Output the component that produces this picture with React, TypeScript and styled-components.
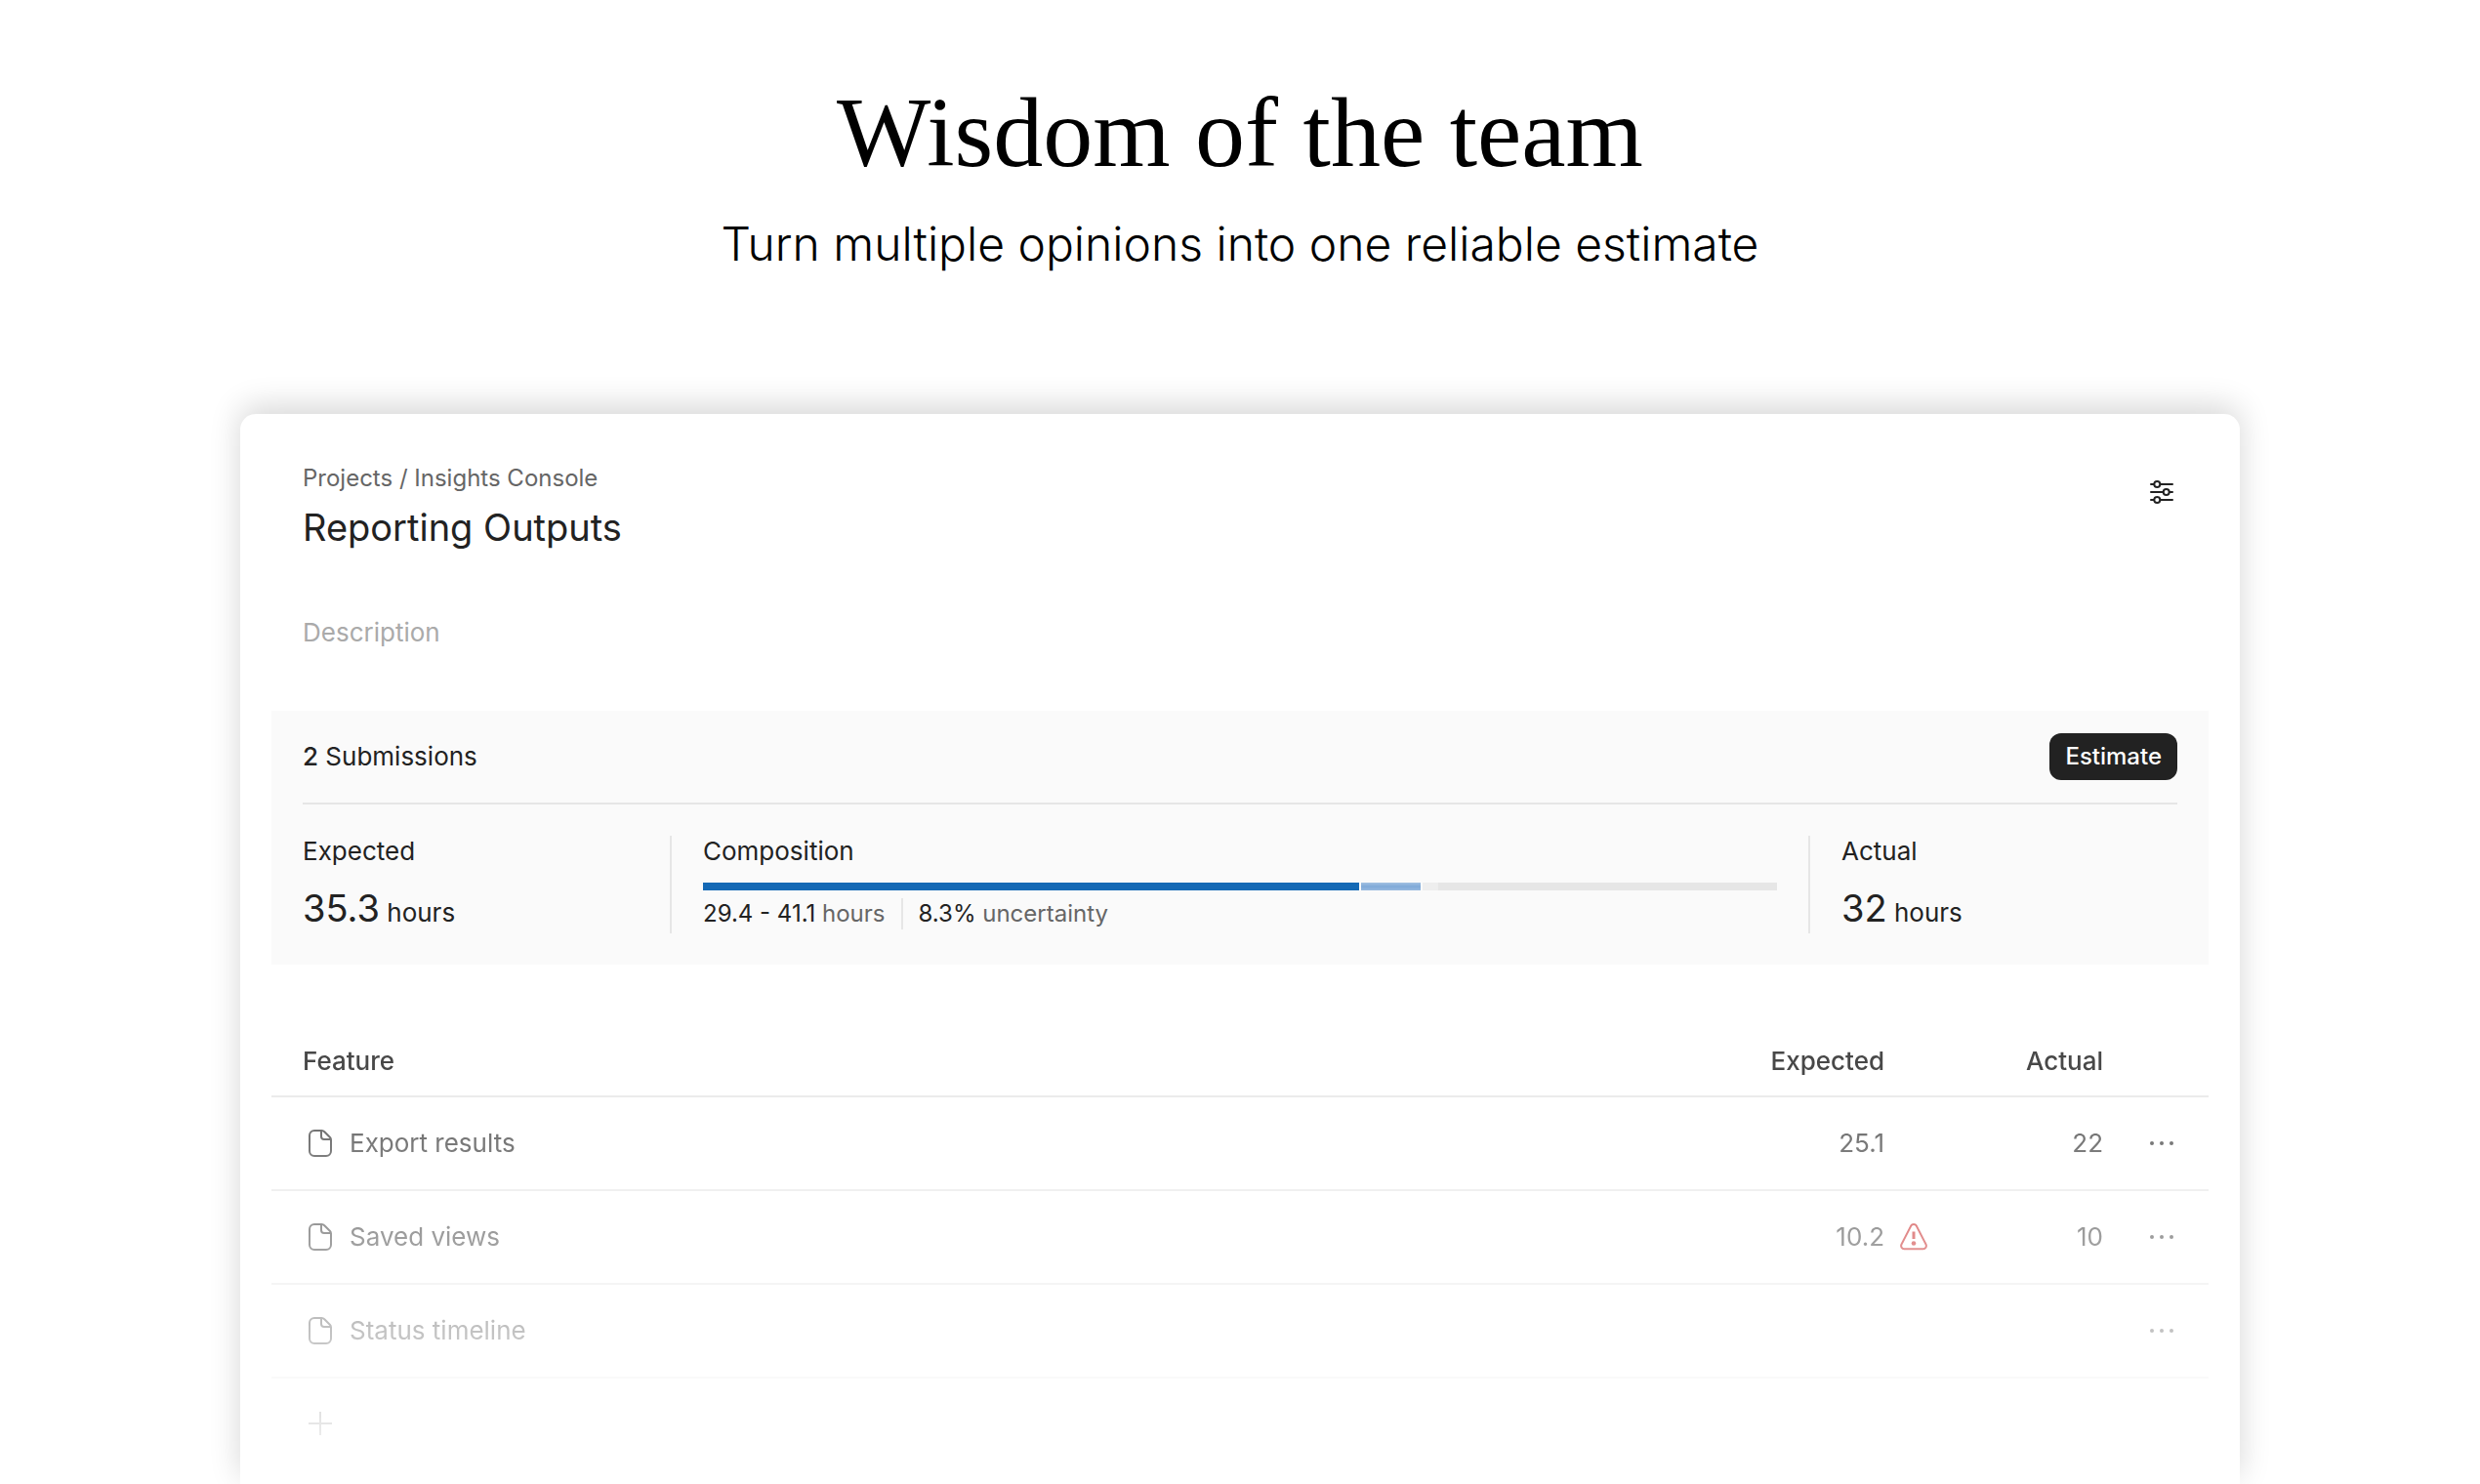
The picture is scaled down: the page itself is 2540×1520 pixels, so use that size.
import React from "react";
import styled, { createGlobalStyle } from "styled-components";

const GlobalStyle = createGlobalStyle`
  *, *::before, *::after { box-sizing: border-box; }
  html, body { margin: 0; background: #fff; }
  body { font-family: Inter, "Noto Sans", sans-serif; font-size: 26px; line-height: 32px; color: #222; }
  button { font: inherit; border: 0; padding: 0; cursor: pointer; }
`;

const Page = styled.main`
  min-height: 100vh;
  overflow: hidden;
  display: flex;
  flex-direction: column;
  align-items: center;
`;

const Hero = styled.header`
  padding: 76px 32px 0;
  text-align: center;
  color: #000;
`;

const Headline = styled.h1`
  margin: 0;
  font: 400 102px/120px "Liberation Serif", serif;
`;

const Tagline = styled.p`
  margin: 24px 0 0;
  font-size: 48px;
  font-weight: 300;
  line-height: 60px;
`;

const Card = styled.section`
  width: calc(100% - 492px);
  flex: 1 0 auto;
  margin-top: 144px;
  padding: 50px 32px 0;
  background: #fff;
  border-radius: 16px 16px 0 0;
  box-shadow: 0 -8px 32px rgba(0, 0, 0, 0.16);
`;

const CardHeader = styled.div`
  display: flex;
  justify-content: space-between;
  align-items: flex-start;
  padding: 0 32px;
`;

const Breadcrumb = styled.nav`
  font-size: 24px;
  color: #666;
  a { color: inherit; text-decoration: none; }
`;

const Title = styled.h2`
  margin: 8px 0 0;
  font-size: 38px;
  font-weight: 400;
  line-height: 52px;
`;

const IconButton = styled.button`
  display: flex;
  background: none;
  color: inherit;
`;

const SettingsSlot = styled.div`
  padding: 16px 2px 0 0;
`;

const Description = styled.input`
  display: block;
  width: calc(100% - 64px);
  height: 32px;
  margin: 66px 32px 0;
  padding: 0;
  border: 0;
  outline: 0;
  background: none;
  font: inherit;
  &::placeholder { color: #aaa; opacity: 1; }
`;

const Panel = styled.section`
  margin-top: 64px;
  padding: 0 32px 32px;
  background: #fafafa;
`;

const PanelHeader = styled.div`
  display: flex;
  justify-content: space-between;
  align-items: center;
  height: 96px;
  border-bottom: 2px solid #e6e6e6;
  strong { font-weight: 500; }
`;

const EstimateButton = styled.button`
  height: 48px;
  padding: 0 16px;
  border-radius: 12px;
  background: #222;
  color: #fff;
  font-size: 24px;
  font-weight: 500;
`;

const Stats = styled.div`
  display: grid;
  grid-template-columns: 376px 1fr 376px;
  grid-template-rows: 100px;
  margin-top: 32px;
`;

const Stat = styled.div<{ $inset?: boolean }>`
  display: flex;
  flex-direction: column;
  gap: 18px;
  padding-left: ${(p) => (p.$inset ? 32 : 0)}px;
`;

const Composition = styled.div`
  padding: 0 32px;
  border: solid #e6e6e6;
  border-width: 0 2px;
`;

const Value = styled.div`
  line-height: 48px;
  b { font-size: 38px; font-weight: 400; }
`;

const Bar = styled.div`
  display: flex;
  gap: 2px;
  height: 8px;
  margin: 16px 0 8px;
`;

const Segment = styled.div<{ $grow: number; $fill: string }>`
  flex: ${(p) => p.$grow} 1 0;
  background: ${(p) => p.$fill};
`;

const Facts = styled.div`
  display: flex;
  font-size: 24px;
  color: #666;
  b { font-weight: 400; color: #222; }
`;

const Fact = styled.span`
  & + & {
    margin-left: 16px;
    padding-left: 16px;
    border-left: 2px solid #e6e6e6;
  }
`;

const Features = styled.div`
  margin-top: 64px;
  mask-image: linear-gradient(#000 70px, transparent 470px);
`;

const Table = styled.table`
  width: 100%;
  border-spacing: 0;
  table-layout: fixed;
  color: #666;
`;

const HeadCell = styled.th<{ $width?: number }>`
  width: ${(p) => (p.$width ? `${p.$width}px` : "auto")};
  height: 72px;
  padding: 0 0 0 ${(p) => (p.$width ? 0 : 32)}px;
  border-bottom: 2px solid #ebebeb;
  text-align: ${(p) => (p.$width ? "right" : "left")};
  font-weight: 500;
  color: #484848;
`;

const Cell = styled.td<{ $number?: boolean }>`
  height: 96px;
  padding: 0 0 0 ${(p) => (p.$number ? 0 : 32)}px;
  border-bottom: 2px solid #ebebeb;
  text-align: ${(p) => (p.$number ? "right" : "left")};
`;

const Name = styled.div`
  display: flex;
  align-items: center;
  gap: 12px;
`;

const Warning = styled.td`
  padding: 0 0 0 14px;
  border-bottom: 2px solid #ebebeb;
  color: #d14a4a;
  svg { display: block; }
`;

const MoreSlot = styled.div`
  display: flex;
  justify-content: flex-end;
  padding-right: 34px;
`;

const AddButton = styled(IconButton)`
  margin: 28px 32px;
  color: #666;
`;

const SlidersIcon = () => (
  <svg width="28" height="28" viewBox="0 0 28 28" fill="none" stroke="currentColor" strokeWidth="2" strokeLinecap="round">
    <path d="M3 6h3M13 6h12M3 14h12M22 14h3M3 22h3M13 22h12" />
    <circle cx="9.300" cy="6" r="3" />
    <circle cx="18.700" cy="14" r="3" />
    <circle cx="9.300" cy="22" r="3" />
  </svg>
);

const FileIcon = () => (
  <svg width="36" height="36" viewBox="0 0 36 36" fill="none" stroke="currentColor" strokeWidth="2" strokeLinejoin="round">
    <path d="M12 5h7.500a4 4 0 0 1 2.800 1.200l5.500 5.500a4 4 0 0 1 1.200 2.800V26a5 5 0 0 1-5 5H12a5 5 0 0 1-5-5V10a5 5 0 0 1 5-5z" />
    <path d="M19 5v6a3 3 0 0 0 3 3h6.500" />
  </svg>
);

const WarningIcon = () => (
  <svg width="32" height="32" viewBox="0 0 32 32" fill="none" stroke="currentColor" strokeWidth="2" strokeLinejoin="round">
    <path d="M13.200 4.600 3.500 23.500a3.200 3.200 0 0 0 2.800 4.700h19.400a3.200 3.200 0 0 0 2.800-4.700L18.800 4.600a3.200 3.200 0 0 0-5.600 0z" />
    <path d="M16 10.500v7.500" strokeWidth="3" />
    <circle cx="16" cy="22.500" r="2.300" fill="currentColor" stroke="none" />
  </svg>
);

const DotsIcon = () => (
  <svg width="28" height="28" viewBox="0 0 28 28" fill="currentColor">
    <circle cx="4" cy="14" r="2" />
    <circle cx="14" cy="14" r="2" />
    <circle cx="24" cy="14" r="2" />
  </svg>
);

const PlusIcon = () => (
  <svg width="36" height="36" viewBox="0 0 36 36" stroke="currentColor" strokeWidth="2">
    <path d="M6 18h24M18 6v24" />
  </svg>
);

const features = [
  { name: "Export results", expected: "25.1", actual: "22" },
  { name: "Saved views", expected: "10.2", actual: "10", warn: true },
  { name: "Status timeline", expected: "", actual: "" },
];

export default function App() {
  return (
    <>
      <GlobalStyle />
      <Page>
        <Hero>
          <Headline>Wisdom of the team</Headline>
          <Tagline>Turn multiple opinions into one reliable estimate</Tagline>
        </Hero>
        <Card>
          <CardHeader>
            <div>
              <Breadcrumb>
                <a href="#projects">Projects</a> / <a href="#console">Insights Console</a>
              </Breadcrumb>
              <Title>Reporting Outputs</Title>
            </div>
            <SettingsSlot>
              <IconButton aria-label="Settings"><SlidersIcon /></IconButton>
            </SettingsSlot>
          </CardHeader>
          <Description aria-label="Description" placeholder="Description" />
          <Panel>
            <PanelHeader>
              <span><strong>2</strong> Submissions</span>
              <EstimateButton>Estimate</EstimateButton>
            </PanelHeader>
            <Stats>
              <Stat>
                <span>Expected</span>
                <Value><b>35.3</b> hours</Value>
              </Stat>
              <Composition>
                <span>Composition</span>
                <Bar>
                  <Segment $grow={672} $fill="#1469b5" />
                  <Segment $grow={61} $fill="linear-gradient(#a3c1e2, #7fa9d8 50%, #97b9df)" />
                  <Segment $grow={363} $fill="linear-gradient(90deg, #eee 16px, #e6e6e6 16px)" />
                </Bar>
                <Facts>
                  <Fact><b>29.4 - 41.1</b> hours</Fact>
                  <Fact><b>8.3%</b> uncertainty</Fact>
                </Facts>
              </Composition>
              <Stat $inset>
                <span>Actual</span>
                <Value><b>32</b> hours</Value>
              </Stat>
            </Stats>
          </Panel>
          <Features>
            <Table>
              <thead>
                <tr>
                  <HeadCell>Feature</HeadCell>
                  <HeadCell $width={200}>Expected</HeadCell>
                  <HeadCell as="td" $width={64} />
                  <HeadCell $width={160}>Actual</HeadCell>
                  <HeadCell as="td" $width={108} />
                </tr>
              </thead>
              <tbody>
                {features.map((f) => (
                  <tr key={f.name}>
                    <Cell><Name><FileIcon />{f.name}</Name></Cell>
                    <Cell $number>{f.expected}</Cell>
                    <Warning>{f.warn && <WarningIcon />}</Warning>
                    <Cell $number>{f.actual}</Cell>
                    <Cell><MoreSlot><IconButton aria-label={`More for ${f.name}`}><DotsIcon /></IconButton></MoreSlot></Cell>
                  </tr>
                ))}
              </tbody>
            </Table>
            <AddButton aria-label="Add feature"><PlusIcon /></AddButton>
          </Features>
        </Card>
      </Page>
    </>
  );
}
